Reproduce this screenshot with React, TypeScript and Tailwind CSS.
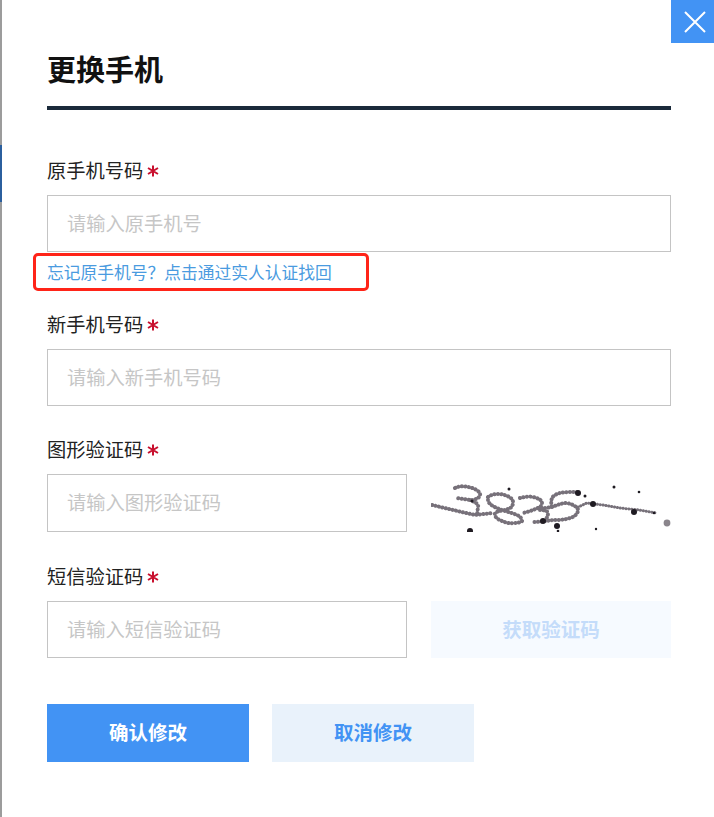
const font = { fontFamily: '"Liberation Sans", "Noto Sans CJK SC", sans-serif' };

function Label({ text }: { text: string }) {
  return (
    <div className="flex items-center h-[26px] pt-[1px] text-[19.25px] leading-[24px] text-[#222]">
      {text}
      <svg width="12" height="12" viewBox="0 0 12 12" className="ml-[4px] mb-[2px]" fill="none" stroke="#c8102e" strokeWidth="2">
        <path d="M6 0.5 V11.5 M1 3 L11 9 M11 3 L1 9" />
      </svg>
    </div>
  );
}

function Field({ placeholder, className }: { placeholder: string; className: string }) {
  return (
    <input
      placeholder={placeholder}
      className={`block border border-[#c4c4c4] bg-white pl-[19px] pt-[2px] text-[19.25px] text-[#333] placeholder-[#c6c6c6] outline-none ${className}`}
    />
  );
}

function Captcha() {
  return (
    <svg viewBox="0 0 240 58" className="w-[240px] h-[58px] shrink-0">
      <g fill="none" stroke="#77717a" strokeWidth="4" strokeLinecap="round" strokeDasharray="0.1 3.4">
        <path d="M1 31 L22 36 L44 41 L62 39" />
        <path d="M24 14 C28 12 33 12 37 13 C44 14 50 18 49 21 C48 25 43 26 39 26 L26 24 M39 26 C44 28 48 30 47 33 L46 41" />
        <path d="M57 23 C61 20 65 20 69 20 C76 21 82 24 82 28 C82 31 81 33 79 34 C74 37 68 36 64 39 C63 42 66 45 69 46 C73 48 78 50 82 49 C87 49 92 48 91 46 C90 43 88 42 86 41 C79 38 72 37 66 34 C61 32 57 29 57 26 Z" />
        <path d="M89 24 C93 23 98 22 102 23 C107 24 111 26 111 29 C111 32 109 33 107 34 C102 36 97 38 92 39 M109 36 C113 36 117 37 117 39 C117 42 116 44 114 46" />
        <path d="M146 18 C140 18 134 18 129 19 C125 20 122 22 121 24 C120 27 120 30 121 33 M107 34 C112 34 117 34 121 33 C126 31 131 29 136 29 C141 30 147 33 147 36 C147 40 143 43 139 44 C133 46 127 46 122 46 C115 47 108 48 101 48" />
      </g>
      <path d="M147 33 L156 29 L172 31 L189 34 L208 36 L226 39" fill="none" stroke="#77717a" strokeWidth="3" strokeLinecap="round" strokeDasharray="0.1 2.8" />
      <g fill="#1f1b22">
        <circle cx="147" cy="19" r="3" />
        <circle cx="162" cy="30" r="3" />
        <circle cx="203" cy="38" r="3" />
        <circle cx="112" cy="47" r="3" />
        <circle cx="126" cy="52" r="3" />
        <circle cx="39" cy="57" r="3" />
        <circle cx="41" cy="27" r="1.5" />
        <circle cx="78" cy="15" r="1.5" />
        <circle cx="183" cy="13" r="1.5" />
        <circle cx="208" cy="18" r="1.3" />
        <circle cx="154" cy="22" r="1.5" />
        <circle cx="127" cy="57" r="1.3" />
        <circle cx="165" cy="55" r="1.2" />
        <circle cx="223" cy="39" r="1.3" />
      </g>
      <circle cx="236" cy="49" r="3.4" fill="#8a858c" />
    </svg>
  );
}

export default function App() {
  return (
    <div className="relative w-[714px] h-[817px] overflow-hidden bg-white" style={font}>
      <div className="absolute left-0 top-0 w-[2px] h-full bg-[#9c9c9c]" />
      <div className="absolute left-0 top-[145px] w-[2px] h-[57px] bg-[#2b5f9e]" />
      <button className="absolute right-0 top-0 w-[43px] h-[43px] bg-[#4293f4] flex items-center justify-center pl-[4px]">
        <svg width="24" height="24" viewBox="0 0 24 24" fill="none" stroke="white" strokeWidth="2">
          <path d="M2 2 L22 22 M22 2 L2 22" />
        </svg>
      </button>

      <div className="pl-[47px] pr-[43px] pt-[51px]">
        <h1 className="h-[40px] text-[29px] leading-[40px] font-bold text-[#111]">更换手机</h1>
        <div className="mt-[15px] h-[4px] bg-[#1a2a3a]" />

        <div className="mt-[48px]">
          <Label text="原手机号码" />
          <Field placeholder="请输入原手机号" className="mt-[11px] w-[624px] h-[57px]" />
          <div className="relative mt-[10px] h-[24px] text-[16.75px] leading-[24px] text-[#4a9be0]">
            忘记原手机号{'\uFF1F'}点击通过实人认证找回
            <div className="absolute left-[-14px] top-[-9px] w-[336px] h-[38px] border-[3px] border-[#ff2418] rounded-[5px]" />
          </div>
        </div>

        <div className="mt-[26px]">
          <Label text="新手机号码" />
          <Field placeholder="请输入新手机号码" className="mt-[11px] w-[624px] h-[57px]" />
        </div>

        <div className="mt-[31px]">
          <Label text="图形验证码" />
          <div className="mt-[11px] flex gap-[24px]">
            <Field placeholder="请输入图形验证码" className="w-[360px] h-[58px]" />
            <Captcha />
          </div>
        </div>

        <div className="mt-[32px]">
          <Label text="短信验证码" />
          <div className="mt-[11px] flex gap-[24px]">
            <Field placeholder="请输入短信验证码" className="w-[360px] h-[57px]" />
            <button className="w-[240px] h-[57px] pt-[2px] bg-[#f6faff] text-[19.5px] font-bold text-[#c4dcfa]">获取验证码</button>
          </div>
        </div>

        <div className="mt-[46px] flex gap-[23px]">
          <button className="w-[202px] h-[58px] pt-[2px] bg-[#4293f4] text-[19.5px] font-bold text-white">确认修改</button>
          <button className="w-[202px] h-[58px] pt-[2px] bg-[#e9f2fb] text-[19.5px] font-bold text-[#4293f4]">取消修改</button>
        </div>
      </div>
    </div>
  );
}
